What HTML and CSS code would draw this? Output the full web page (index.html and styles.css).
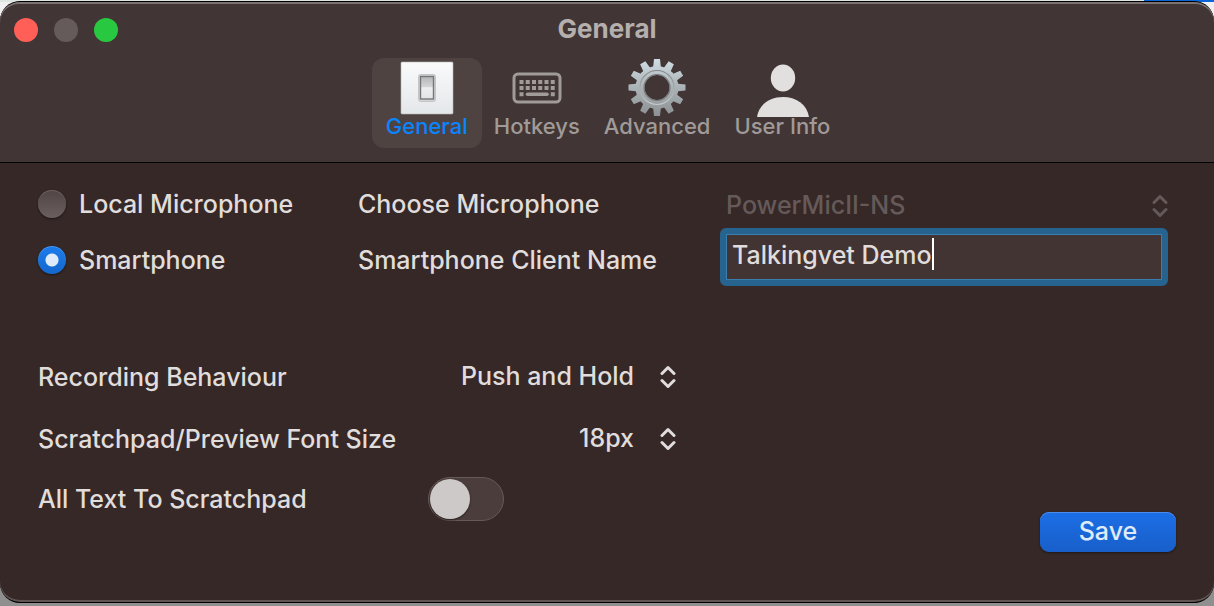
FILE: index.html
```html
<!DOCTYPE html>
<html lang="en">
<head>
  <meta charset="UTF-8" />
  <title>General</title>
  <link rel="stylesheet" href="styles.css">
</head>
<body>
  <div class="window">
    <header class="header">
      <div class="titlebar">
        <div class="lights">
          <button class="light close" aria-label="Close"></button>
          <button class="light minimize" aria-label="Minimize" disabled></button>
          <button class="light zoom" aria-label="Zoom"></button>
        </div>
        <h1>General</h1>
      </div>
      <nav class="tabs">
        <button class="tab active">
          <svg width="60" height="60" viewBox="0 0 60 60">
            <defs>
              <linearGradient id="plate" x1="0" y1="0" x2="0" y2="1">
                <stop offset="0" stop-color="#fafafb" />
                <stop offset="1" stop-color="#e4e7ea" />
              </linearGradient>
              <linearGradient id="rocker" x1="0" y1="0" x2="0" y2="1">
                <stop offset="0" stop-color="#b4b6b8" />
                <stop offset="0.45" stop-color="#d2d4d6" />
                <stop offset="0.5" stop-color="#eceef0" />
                <stop offset="1" stop-color="#e2e5e8" />
              </linearGradient>
            </defs>
            <rect x="4" y="4" width="52" height="52" rx="1" fill="url(#plate)" stroke="#b9b7b7" stroke-width="0.6" />
            <rect x="21.500" y="16.500" width="17" height="27" rx="2" fill="#d3d5d7" stroke="#c3c5c7" />
            <rect x="23.500" y="18.500" width="13" height="22.500" fill="url(#rocker)" stroke="#747678" stroke-width="1.400" />
          </svg>
          <span>General</span>
        </button>
        <button class="tab">
          <svg width="60" height="60" viewBox="0 0 60 60">
            <rect x="7" y="16" width="46" height="28" rx="4" fill="none" stroke="#a09a98" stroke-width="3" />
            <g stroke="#a09a98" stroke-width="4" fill="none">
              <path d="M12.500 24H48" stroke-dasharray="4 2.250" />
              <path d="M12.500 30H48" stroke-dasharray="4 2.250" />
              <path d="M12.500 36.300h4M43.800 36.300h4" />
              <path d="M20.500 36.300h19.500" stroke-width="3.600" stroke-linecap="round" />
            </g>
          </svg>
          <span>Hotkeys</span>
        </button>
        <button class="tab">
          <svg width="60" height="60" viewBox="0 0 60 60">
            <defs>
              <linearGradient id="steel" gradientUnits="userSpaceOnUse" x1="0" y1="-29" x2="0" y2="29">
                <stop offset="0" stop-color="#d0dde3" />
                <stop offset="0.5" stop-color="#aab3b6" />
                <stop offset="1" stop-color="#8c9092" />
              </linearGradient>
              <linearGradient id="rim" x1="0" y1="0" x2="0" y2="1">
                <stop offset="0" stop-color="#86888a" />
                <stop offset="1" stop-color="#c6c8c9" />
              </linearGradient>
              <path id="teeth" d="M-4-19L-3-28.500H3L4-19ZM-4 19L-3 28.500H3L4 19Z" />
              <mask id="gear">
                <g fill="#fff">
                  <circle r="21.500" />
                  <use href="#teeth" />
                  <use href="#teeth" transform="rotate(30)" />
                  <use href="#teeth" transform="rotate(60)" />
                  <use href="#teeth" transform="rotate(90)" />
                  <use href="#teeth" transform="rotate(120)" />
                  <use href="#teeth" transform="rotate(150)" />
                </g>
                <circle r="12.500" fill="#000" />
              </mask>
            </defs>
            <g transform="translate(30 29.500)">
              <rect x="-30" y="-30" width="60" height="60" fill="url(#steel)" mask="url(#gear)" />
              <circle r="17" fill="none" stroke="url(#rim)" stroke-width="1.200" />
              <circle r="13" fill="none" stroke="#77797a" stroke-width="1.200" />
            </g>
          </svg>
          <span>Advanced</span>
        </button>
        <button class="tab">
          <svg width="60" height="60" viewBox="0 0 60 60">
            <ellipse cx="31" cy="20" rx="12.200" ry="13.500" fill="#e2dfdf" />
            <path d="M5 59C7 46 18 39 31 39S55 46 57 59Z" fill="#e2dfdf" />
          </svg>
          <span>User Info</span>
        </button>
      </nav>
    </header>

    <form class="content" onsubmit="return false">
      <div class="sources">
        <label class="radio"><input type="radio" name="source"> Local Microphone</label>
        <label for="microphone">Choose Microphone</label>
        <div class="picker wide">
          <select id="microphone" disabled>
            <option>PowerMicII-NS</option>
          </select>
          <svg width="16" height="24" viewBox="0 0 16 24"><path d="M2 8.500L8 2.500L14 8.500M2 15.500L8 21.500L14 15.500" /></svg>
        </div>

        <label class="radio lower"><input type="radio" name="source" checked> Smartphone</label>
        <label class="lower" for="client">Smartphone Client Name</label>
        <div class="field">
          <input type="text" id="client" value="Talkingvet Demo">
          <span class="caret"></span>
        </div>
      </div>

      <div class="bottom">
        <div class="settings">
          <label for="behaviour">Recording Behaviour</label>
          <div class="picker">
            <select id="behaviour">
              <option>Push and Hold</option>
              <option>Toggle</option>
            </select>
            <svg width="16" height="24" viewBox="0 0 16 24"><path d="M2 8.500L8 2.500L14 8.500M2 15.500L8 21.500L14 15.500" /></svg>
          </div>

          <label for="fontsize">Scratchpad/Preview Font Size</label>
          <div class="picker">
            <select id="fontsize">
              <option>18px</option>
              <option>20px</option>
            </select>
            <svg width="16" height="24" viewBox="0 0 16 24"><path d="M2 8.500L8 2.500L14 8.500M2 15.500L8 21.500L14 15.500" /></svg>
          </div>

          <label for="alltext">All Text To Scratchpad</label>
          <input type="checkbox" id="alltext" class="switch">
        </div>
        <button class="save">Save</button>
      </div>
    </form>
  </div>
</body>
</html>
```
FILE: styles.css
```css
* {
  box-sizing: border-box;
}
body {
  margin: 0;
  min-height: 100vh;
  padding: 1px 0 3px;
  display: flex;
  background: linear-gradient(to left, #0a66d8 70px, #dfe5e1 70px) top / 100% 2px no-repeat,
    linear-gradient(#f0f0f0 50%, #8f8f8f 50%);
  font-family: Inter, "Liberation Sans", sans-serif;
  font-size: 25px;
  font-weight: 500;
  line-height: 32px;
  color: #e0dddc;
}
button, input, select {
  font: inherit;
  color: inherit;
}
button {
  border: none;
  padding: 0;
  background: none;
}
.window {
  flex: 1;
  display: flex;
  flex-direction: column;
  border: 1px solid #000;
  border-width: 1px 0;
  border-radius: 20px;
  background: #352827;
  box-shadow: inset 0 -2px #615553;
  overflow: hidden;
}
.header {
  height: 161px;
  background: #413635;
  border-bottom: 1px solid #000;
  border-radius: 19px 19px 0 0;
  box-shadow: inset 0 2px #7c7472;
}
.titlebar {
  height: 56px;
  padding: 0 14px;
  display: grid;
  grid-template-columns: 1fr auto 1fr;
  align-items: center;
}
.lights {
  display: flex;
  gap: 16px;
}
.light {
  width: 24px;
  height: 24px;
  border-radius: 50%;
}
.close {
  background: #ff5f57;
}
.minimize {
  background: #655b5a;
}
.zoom {
  background: #28c840;
}
h1 {
  margin: 0;
  padding-bottom: 2px;
  font-size: 26px;
  font-weight: 700;
  color: #b5afad;
}
.tabs {
  display: flex;
  justify-content: center;
}
.tab {
  min-width: 110px;
  height: 90px;
  padding: 0 12px;
  display: flex;
  flex-direction: column;
  align-items: center;
  border-radius: 12px;
  font-size: 22px;
  line-height: 16px;
  color: #a09a98;
}
.tab.active {
  background: #4e4341;
  color: #0a84ff;
}
.content {
  flex: 1;
  display: flex;
  flex-direction: column;
  justify-content: space-between;
  padding: 17px 38px 50px;
}
.sources {
  display: grid;
  grid-template-columns: 320px 362px 1fr;
  grid-template-rows: 48px 58px;
  align-items: center;
  padding-right: 8px;
}
.radio {
  display: flex;
  align-items: center;
  gap: 13px;
}
.lower {
  padding-top: 6px;
}
.radio input {
  appearance: none;
  width: 28px;
  height: 28px;
  margin: 0;
  border-radius: 50%;
  background: linear-gradient(#504544, #6b605f);
  box-shadow: 0 1px 2px #1f1615, inset 0 1px #6b605f;
}
.radio input:checked {
  background: radial-gradient(circle, #dfeafa 6px, transparent 7px), linear-gradient(#1c7cec, #1567cc);
  box-shadow: 0 1px 2px #1f1615, inset 0 1px #4a98f2;
}
.picker {
  display: grid;
  align-items: center;
}
.picker select, .picker svg {
  grid-area: 1 / 1;
}
.picker select {
  appearance: none;
  width: 100%;
  padding: 0 44px 2px 6px;
  border: none;
  background: none;
  text-align-last: right;
}
.picker svg {
  justify-self: end;
  margin-right: 2px;
  fill: none;
  stroke: #e0dddc;
  stroke-width: 3;
  stroke-linecap: round;
  stroke-linejoin: round;
  pointer-events: none;
}
.picker.wide {
  padding-top: 4px;
}
.picker.wide select {
  text-align-last: left;
  color: #655a59;
  opacity: 1;
}
.picker.wide svg {
  margin-right: 0;
  stroke: #655a59;
}
.field {
  position: relative;
}
.field input {
  display: block;
  width: 100%;
  height: 58px;
  padding: 0 6px 4px;
  border: 6px solid #26648f;
  border-radius: 6px;
  outline: 1px solid #3b7fae;
  outline-offset: -7px;
  background: #413433;
  caret-color: transparent;
}
.caret {
  position: absolute;
  left: 212px;
  top: 10px;
  width: 2px;
  height: 32px;
  background: #fff;
}
.bottom {
  display: flex;
  justify-content: space-between;
  align-items: flex-end;
}
.settings {
  display: grid;
  grid-template-columns: 390px 250px;
  grid-template-rows: 62px 62px 58px;
  align-items: center;
  margin-bottom: 24px;
}
.switch {
  appearance: none;
  display: flex;
  width: 76px;
  height: 44px;
  margin: 0;
  padding: 1px;
  border: 1px solid #665a59;
  border-radius: 22px;
  background: #4a3d3c;
}
.switch::before {
  content: "";
  width: 40px;
  height: 40px;
  border-radius: 50%;
  background: #cdc9c8;
  box-shadow: 0 1px 2px #2a1f1e;
}
.switch:checked {
  justify-content: flex-end;
  background: #1a68dc;
}
.save {
  width: 136px;
  height: 40px;
  padding-bottom: 2px;
  border-radius: 9px;
  background: linear-gradient(#1c6ee6, #185fca);
  box-shadow: 0 1px 2px #1f1615, inset 0 1px #4a8cec;
  color: #dfeafa;
}
```
